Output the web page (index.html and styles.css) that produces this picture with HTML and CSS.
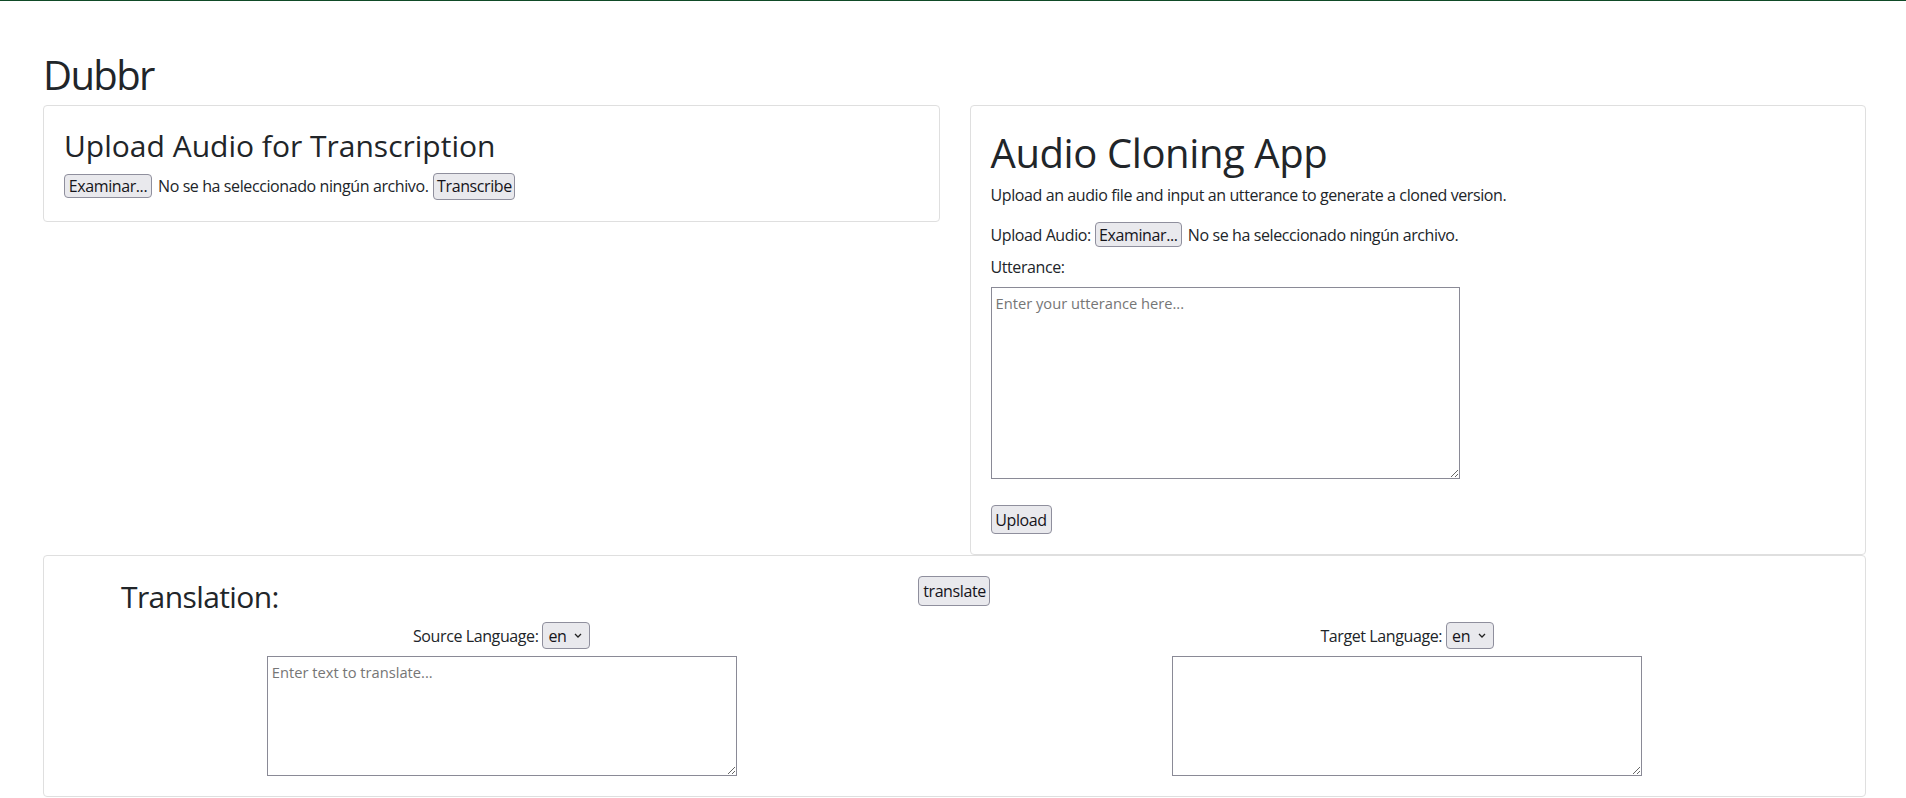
FILE: index.html
```html
<!DOCTYPE html>
<html lang="es">
<head>
<meta charset="utf-8">
<title>Dubbr</title>
<link rel="stylesheet" href="styles.css">
</head>
<body>
<div class="topbar"></div>
<main class="page">
  <h1 class="brand">Dubbr</h1>
  <div class="cards">
    <section class="card card-transcribe">
      <h3 class="card-title">Upload Audio for Transcription</h3>
      <div class="file-row">
        <button class="btn btn-file">Examinar...</button>
        <span class="file-name">No se ha seleccionado ningún archivo.</span>
        <button class="btn btn-transcribe">Transcribe</button>
      </div>
    </section>
    <section class="card card-clone">
      <h1 class="clone-title">Audio Cloning App</h1>
      <p class="lead-text">Upload an audio file and input an utterance to generate a cloned version.</p>
      <div class="upload-row">
        <label class="upload-label">Upload Audio:</label>
        <button class="btn btn-file btn-file-lg">Examinar...</button>
        <span class="file-name">No se ha seleccionado ningún archivo.</span>
      </div>
      <label class="field-label">Utterance:</label>
      <textarea class="textbox utterance" placeholder="Enter your utterance here..."></textarea>
      <button class="btn btn-upload">Upload</button>
    </section>
  </div>
  <section class="card card-translate">
    <div class="translate-head">
      <div class="head-cell"><h2 class="translate-title">Translation:</h2></div>
      <div class="head-cell"><button class="btn btn-translate">translate</button></div>
      <div class="head-cell"></div>
    </div>
    <div class="lang-grid">
      <div class="lang-col">
        <div class="lang-label">Source Language: <span class="select">en <svg class="chev" width="8" height="5" viewBox="0 0 8 5"><path d="M1 1 L4 4 L7 1" fill="none" stroke="#222" stroke-width="1.3"/></svg></span></div>
        <textarea class="textbox lang-text" placeholder="Enter text to translate..."></textarea>
      </div>
      <div class="lang-col">
        <div class="lang-label">Target Language: <span class="select">en <svg class="chev" width="8" height="5" viewBox="0 0 8 5"><path d="M1 1 L4 4 L7 1" fill="none" stroke="#222" stroke-width="1.3"/></svg></span></div>
        <textarea class="textbox lang-text"></textarea>
      </div>
    </div>
  </section>
</main>
</body>
</html>
```
FILE: styles.css
```css
html, body {
  margin: 0;
  background: #fff;
}
body {
  font-family: "Open Sans", "Noto Sans", sans-serif;
  font-size: 16px;
  line-height: 1.5;
  color: #212529;
  letter-spacing: -0.025em;
}
.topbar {
  height: 1px;
  background: #0f4a27;
}
.page {
  padding: 50px 40px 0 43px;
}
.brand {
  font-size: 40px;
  line-height: 48px;
  font-weight: 400;
  letter-spacing: -0.04em;
  margin: 0 0 6px;
}
.cards {
  display: grid;
  grid-template-columns: 1fr 1fr;
  column-gap: 30px;
  align-items: start;
}
.card {
  border: 1px solid #dfdfdf;
  border-radius: 4px;
  padding: 20px;
  background: #fff;
  box-sizing: border-box;
  min-width: 0;
}
.card-title {
  font-size: 30px;
  line-height: 33.6px;
  font-weight: 400;
  letter-spacing: 0;
  margin: 3px 0 5px;
}
.file-row {
  display: flex;
  align-items: center;
  padding: 5px 0 1px;
}
.file-name {
  margin: 0 5px 0 6px;
  white-space: nowrap;
}
.btn {
  font-family: inherit;
  font-size: 16px;
  letter-spacing: inherit;
  color: #15141a;
  background: #e9e9ed;
  border: 1px solid #8f8f9d;
  border-radius: 4px;
  padding: 0 6px;
  box-sizing: border-box;
  display: inline-flex;
  align-items: center;
  justify-content: center;
  line-height: 1;
  cursor: default;
}
.btn-file {
  height: 24px;
  width: 88px;
}
.btn-file-lg {
  height: 25px;
  width: 87px;
}
.btn-transcribe {
  height: 27px;
  width: 82px;
}
.card-clone {
  display: flex;
  flex-direction: column;
  align-items: flex-start;
}
.clone-title {
  font-size: 40px;
  line-height: 48px;
  font-weight: 400;
  margin: 3px 0 5px;
}
.lead-text {
  margin: 1px 0 15px;
  line-height: 24px;
}
.upload-row {
  display: flex;
  align-items: center;
  height: 25px;
  margin-bottom: 8px;
}
.upload-label {
  margin-right: 4px;
}
.field-label {
  display: block;
  line-height: 24px;
  margin-bottom: 8px;
}
.textbox {
  box-sizing: border-box;
  border: 1px solid #8a8a96;
  border-radius: 0;
  padding: 5px 4px 2px;
  font-family: "Open Sans", "Noto Sans", sans-serif;
  font-size: 14.7px;
  letter-spacing: 0;
  color: #212529;
  background: #fff;
  margin: 0;
}
.textbox::placeholder {
  color: #767676;
}
.utterance {
  display: block;
  width: 469px;
  height: 192px;
}
.btn-upload {
  margin-top: 26px;
  height: 29px;
  width: 61px;
}
.translate-head {
  display: grid;
  grid-template-columns: 2fr 8fr 2fr;
  margin: 0 -15px;
}
.head-cell {
  padding: 0 15px;
  text-align: center;
}
.translate-title {
  font-size: 30px;
  line-height: 38.4px;
  font-weight: 400;
  letter-spacing: -0.02em;
  margin: 2px 0 6px;
}
.btn-translate {
  height: 30px;
  width: 72px;
}
.lang-grid {
  display: grid;
  grid-template-columns: 1fr 1fr;
  margin: 0 -15px;
}
.lang-col {
  padding: 0 15px;
  text-align: center;
}
.lang-label {
  display: flex;
  justify-content: center;
  align-items: center;
  height: 27px;
  gap: 4px;
}
.select {
  display: inline-flex;
  align-items: center;
  height: 27px;
  width: 48px;
  box-sizing: border-box;
  padding: 0 7px 0 5px;
  border: 1px solid #8f8f9d;
  border-radius: 4px;
  background: #e9e9ed;
  color: #15141a;
  justify-content: space-between;
}
.chev {
  display: block;
}
.lang-text {
  display: block;
  margin: 7px auto 0;
  width: 470px;
  height: 120px;
}
```
